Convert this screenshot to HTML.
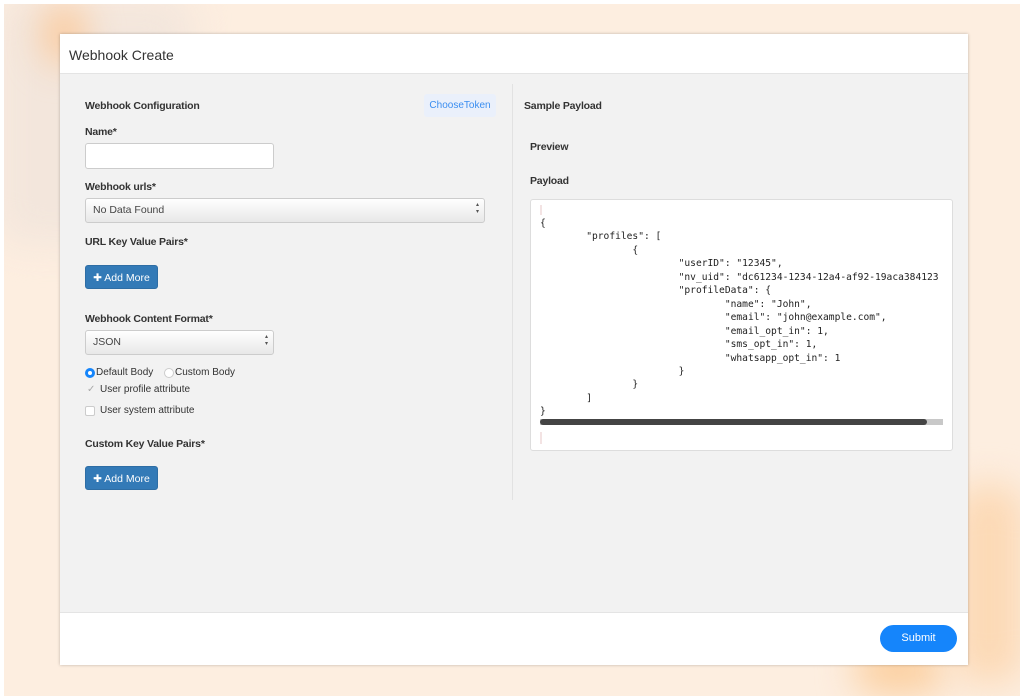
<!DOCTYPE html>
<html><head><meta charset="utf-8"><style>
*{box-sizing:border-box;margin:0;padding:0}
body{width:1024px;height:700px;overflow:hidden;background:#fff;font-family:"Liberation Sans",sans-serif;position:relative}
.bg{position:absolute;left:4px;top:4px;width:1016px;height:692px;background:#fdeee0;overflow:hidden}
.blob{position:absolute;border-radius:30px;filter:blur(18px)}
.modal{position:absolute;left:60px;top:34px;width:908px;height:631px;background:#f2f2f2;box-shadow:0 0 3px rgba(0,0,0,.25)}
.hdr{height:40px;background:#fff;border-bottom:1px solid #e4e4e4;padding:13px 9px;font-size:14px;color:#333}
.ftr{position:absolute;left:0;right:0;bottom:0;height:53px;background:#fff;border-top:1px solid #e4e4e4}
.sub{position:absolute;right:11px;top:12px;width:77px;height:27px;border-radius:14px;background:#1585fb;color:#fff;font-size:11px;text-align:center;line-height:27px}
.lbl{position:absolute;font-size:10.5px;font-weight:bold;color:#333;letter-spacing:-0.2px}
.inp{position:absolute;background:#fff;border:1px solid #ccc;border-radius:3px}
.sel{position:absolute;border:1px solid #ccc;border-radius:3px;background:linear-gradient(#fff,#e8e8e8);font-size:10.5px;color:#444;padding-left:7px;line-height:23px}
.sel:after{content:"▴\A▾";white-space:pre;position:absolute;right:5px;top:3px;font-size:6px;line-height:7px;color:#555}
.btn{position:absolute;width:73px;height:24px;background:#337ab7;border-radius:3px;color:#fff;font-size:10.5px;line-height:24px;text-align:center;border:1px solid #2e6da4}
.t{position:absolute;font-size:10px;color:#333}
pre{position:absolute;left:540px;top:217px;font-family:"DejaVu Sans Mono",monospace;font-size:9.6px;line-height:13.45px;color:#222;tab-size:8}
</style></head><body>
<div class="bg">
<div class="blob" style="left:-10px;top:-10px;width:200px;height:250px;background:#f3e6dc"></div>
<div class="blob" style="left:40px;top:0;width:40px;height:60px;background:#fbc99a"></div>
<div class="blob" style="left:850px;top:640px;width:90px;height:50px;background:#fbcf9f"></div>
<div class="blob" style="left:950px;top:480px;width:70px;height:200px;background:#fcd9b5"></div>
</div>
<div class="modal">
<div class="hdr">Webhook Create</div>
<div style="position:absolute;left:452px;top:50px;width:1px;height:416px;background:#e2e2e2"></div>
<div class="ftr"><div class="sub">Submit</div></div>
</div>
<div class="lbl" style="left:85px;top:100px">Webhook Configuration</div>
<div style="position:absolute;left:424px;top:94px;width:72px;height:23px;background:#eaf0fb;border-radius:3px;color:#3b8ef0;font-size:10px;text-align:center;line-height:23px">ChooseToken</div>
<div class="lbl" style="left:85px;top:126px">Name*</div>
<div class="inp" style="left:85px;top:143px;width:189px;height:26px"></div>
<div class="lbl" style="left:85px;top:181px">Webhook urls*</div>
<div class="sel" style="left:85px;top:198px;width:400px;height:25px">No Data Found</div>
<div class="lbl" style="left:85px;top:236px">URL Key Value Pairs*</div>
<div class="btn" style="left:85px;top:265px">✚ Add More</div>
<div class="lbl" style="left:85px;top:313px">Webhook Content Format*</div>
<div class="sel" style="left:85px;top:330px;width:189px;height:25px">JSON</div>
<div style="position:absolute;left:85px;top:368px;width:10px;height:10px;border-radius:50%;border:3px solid #1585fb;background:#fff"></div>
<div class="t" style="left:96px;top:367px">Default Body</div>
<div style="position:absolute;left:164px;top:368px;width:10px;height:10px;border-radius:50%;border:1px solid #ccc;background:#fff"></div>
<div class="t" style="left:175px;top:367px">Custom Body</div>
<div class="t" style="left:87px;top:384px;color:#aaa">✓</div>
<div class="t" style="left:100px;top:384px">User profile attribute</div>
<div style="position:absolute;left:85px;top:406px;width:10px;height:10px;border:1px solid #ccc;border-radius:2px;background:#fff"></div>
<div class="t" style="left:100px;top:405px">User system attribute</div>
<div class="lbl" style="left:85px;top:438px">Custom Key Value Pairs*</div>
<div class="btn" style="left:85px;top:466px">✚ Add More</div>
<div class="lbl" style="left:524px;top:100px">Sample Payload</div>
<div class="lbl" style="left:530px;top:141px">Preview</div>
<div class="lbl" style="left:530px;top:175px">Payload</div>
<div class="inp" style="left:530px;top:199px;width:423px;height:252px;border-color:#ddd;overflow:hidden">
<div style="position:absolute;left:9px;top:232px;width:2px;height:12px;background:#f3e3e3"></div>
<div style="position:absolute;left:9px;top:5px;width:2px;height:10px;background:#f3e3e3"></div>
<div style="position:absolute;left:9px;top:219px;width:403px;height:6px;background:#c8c8c8"></div>
<div style="position:absolute;left:9px;top:219px;width:387px;height:6px;background:#444;border-radius:3px"></div>
</div>
<pre>{
	"profiles": [
		{
			"userID": "12345",
			"nv_uid": "dc61234-1234-12a4-af92-19aca384123
			"profileData": {
				"name": "John",
				"email": "john@example.com",
				"email_opt_in": 1,
				"sms_opt_in": 1,
				"whatsapp_opt_in": 1
			}
		}
	]
}</pre>
</body></html>
